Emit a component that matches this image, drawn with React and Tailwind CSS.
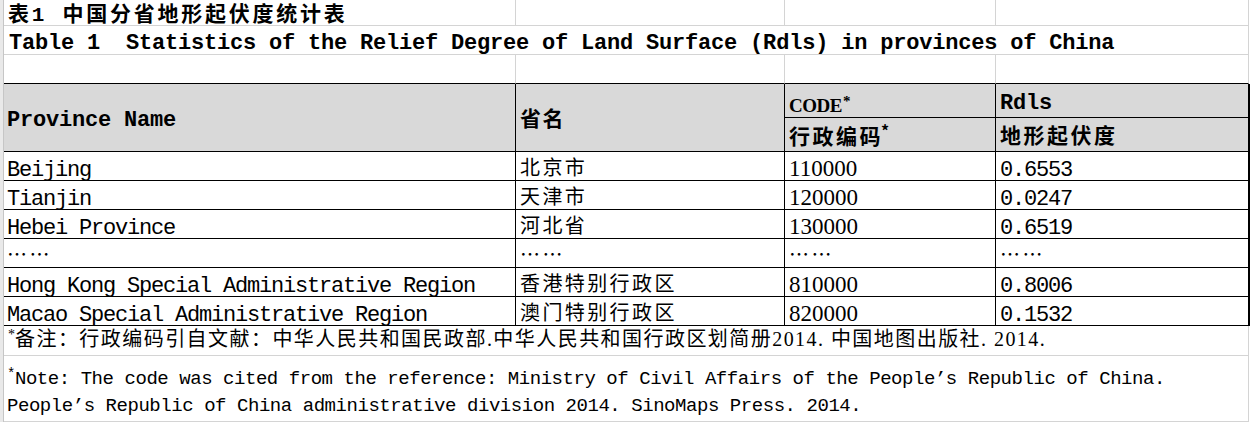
import React from "react";

const MONO = "font-['Liberation_Mono','Noto_Sans_CJK_SC',monospace]";
const CJK = "font-['Noto_Sans_CJK_SC',sans-serif]";
const SERIF = "font-['Liberation_Serif','Noto_Sans_CJK_SC',serif]";

const GRID = "border-[#d4d4d4]";

function Strip() {
  return <div className="w-[4px] shrink-0 self-stretch bg-[#e9e9e9] border-r border-[#c6c6c6]" />;
}

function Star({ cls }) {
  return <span className={`relative ${cls}`}>*</span>;
}

const rows = [
  ["Beijing", "北京市", "110000", "0.6553"],
  ["Tianjin", "天津市", "120000", "0.0247"],
  ["Hebei Province", "河北省", "130000", "0.6519"],
  ["……", "……", "……", "……"],
  ["Hong Kong Special Administrative Region", "香港特别行政区", "810000", "0.8006"],
  ["Macao Special Administrative Region", "澳门特别行政区", "820000", "0.1532"],
];

function DataRow({ r }) {
  const dots = r[0] === "……";
  return (
    <div className="flex h-[29px] shrink-0">
      <Strip />
      <div className="flex w-[512px] shrink-0 items-end border-r border-b border-black pl-[3px]">
        {dots ? (
          <span className={`${CJK} block text-[20px] leading-[20px] tracking-[2.4px] pb-[3px]`}>{r[0]}</span>
        ) : (
          <span className={`${MONO} block text-[22px] leading-[16px] tracking-[-1.2px] pb-[1px] whitespace-pre`}>{r[0]}</span>
        )}
      </div>
      <div className="flex w-[269px] shrink-0 items-end border-r border-b border-black pl-[4px]">
        <span className={`${CJK} block text-[20px] leading-[20px] tracking-[2.4px] pb-[3px]`}>{r[1]}</span>
      </div>
      <div className="flex w-[211px] shrink-0 items-end border-r border-b border-black pl-[4px]">
        {dots ? (
          <span className={`${CJK} block text-[20px] leading-[20px] tracking-[2.4px] pb-[3px]`}>{r[2]}</span>
        ) : (
          <span className={`${SERIF} block text-[23px] leading-[16px] pb-[3px]`}>{r[2]}</span>
        )}
      </div>
      <div className="flex w-[254px] shrink-0 items-end border-r-2 border-b border-black pl-[4px]">
        {dots ? (
          <span className={`${CJK} block text-[20px] leading-[20px] tracking-[2.4px] pb-[3px]`}>{r[3]}</span>
        ) : (
          <span className={`${MONO} block text-[22px] leading-[16px] tracking-[-1.2px] pb-[1px]`}>{r[3]}</span>
        )}
      </div>
    </div>
  );
}

export default function App() {
  return (
    <div className="w-[1251px] h-[423px] overflow-hidden bg-white text-black flex flex-col">
      {/* Row 1: Chinese title */}
      <div className="flex h-[26px] shrink-0">
        <Strip />
        <div className={`flex w-[512px] shrink-0 items-end border-r border-b ${GRID} pl-[4px]`}>
          <span className={`${MONO} block text-[21px] font-bold leading-[18px] tracking-[2.75px] whitespace-pre`}>
            表1 中国分省地形起伏度统计表
          </span>
        </div>
        <div className={`w-[269px] shrink-0 border-r border-b ${GRID}`} />
        <div className={`w-[211px] shrink-0 border-r border-b ${GRID}`} />
        <div className={`w-[253px] shrink-0 border-r border-b ${GRID}`} />
      </div>

      {/* Row 2: English title */}
      <div className="flex h-[29px] shrink-0">
        <Strip />
        <div className={`flex w-[992px] shrink-0 items-end border-b ${GRID} pl-[5px]`}>
          <span className={`${MONO} block text-[22px] font-bold leading-[16px] tracking-[-0.2px] pb-[2px] whitespace-pre`}>
            Table 1  Statistics of the Relief Degree of Land Surface (Rdls) in provinces of China
          </span>
        </div>
        <div className={`w-[253px] shrink-0 border-r border-b ${GRID}`} />
      </div>

      {/* Row 3: empty, bottom border black */}
      <div className="flex h-[29px] shrink-0">
        <Strip />
        <div className="w-[512px] shrink-0 border-r border-b border-r-[#d4d4d4] border-b-black" />
        <div className="w-[269px] shrink-0 border-r border-b border-r-[#d4d4d4] border-b-black" />
        <div className="w-[211px] shrink-0 border-r border-b border-r-[#d4d4d4] border-b-black" />
        <div className="w-[253px] shrink-0 border-r border-b border-r-[#d4d4d4] border-b-black" />
      </div>

      {/* Header rows */}
      <div className="flex h-[68px] shrink-0">
        <Strip />
        <div className="flex w-[512px] shrink-0 items-end bg-[#d9d9d9] border-r border-b border-black pl-[3px]">
          <span className={`${MONO} block text-[22px] font-bold leading-[16px] tracking-[-0.2px] pb-[22px] whitespace-pre`}>
            Province Name
          </span>
        </div>
        <div className="flex w-[269px] shrink-0 items-end bg-[#d9d9d9] border-r border-b border-black pl-[4px]">
          <span className={`${CJK} block text-[21px] font-bold leading-[21px] tracking-[1.5px] pb-[23px]`}>省名</span>
        </div>
        <div className="flex flex-col w-[465px] shrink-0">
          <div className="flex h-[34px] shrink-0">
            <div className="flex w-[211px] shrink-0 items-end bg-[#d9d9d9] border-r border-b border-black pl-[4px]">
              <span className={`${SERIF} block text-[19px] font-bold leading-[14px] tracking-[-0.5px] pb-[3px]`}>
                CODE<Star cls="text-[15px] -top-[6px] ml-[1px]" />
              </span>
            </div>
            <div className="flex w-[254px] shrink-0 items-end bg-[#d9d9d9] border-r-2 border-b border-black pl-[4px]">
              <span className={`${MONO} block text-[22px] font-bold leading-[16px] tracking-[-0.2px] pb-[5px]`}>Rdls</span>
            </div>
          </div>
          <div className="flex h-[34px] shrink-0">
            <div className="flex w-[211px] shrink-0 items-end bg-[#d9d9d9] border-r border-b border-black pl-[4px]">
              <span className={`${CJK} block text-[21px] font-bold leading-[21px] tracking-[2.5px] pb-[3px]`}>
                行政编码<Star cls="text-[16px] -top-[7px] -ml-[2px]" />
              </span>
            </div>
            <div className="flex w-[254px] shrink-0 items-end bg-[#d9d9d9] border-r-2 border-b border-black pl-[4px]">
              <span className={`${CJK} block text-[21px] font-bold leading-[21px] tracking-[2.5px] pb-[6px]`}>地形起伏度</span>
            </div>
          </div>
        </div>
      </div>

      {rows.map((r, i) => (
        <DataRow key={i} r={r} />
      ))}

      {/* Note row 1 (Chinese) */}
      <div className="flex h-[30px] shrink-0">
        <Strip />
        <div className={`flex w-[1245px] shrink-0 items-end border-r border-b ${GRID} pl-[4px]`}>
          <span className={`${SERIF} block text-[20px] leading-[20px] tracking-[1.45px] pb-[3px] whitespace-pre`}>
            <Star cls="text-[14px] -top-[7px] tracking-normal" />
            备注：行政编码引自文献：中华人民共和国民政部.中华人民共和国行政区划简册2014. 中国地图出版社. 2014.
          </span>
        </div>
      </div>

      {/* Note row 2 (English) */}
      <div className="flex h-[66px] shrink-0">
        <Strip />
        <div className={`flex w-[1245px] shrink-0 items-end border-r border-b ${GRID} pl-[3px]`}>
          <div className={`${MONO} text-[19px] leading-[26px] tracking-[-0.45px] pb-[2px] whitespace-pre`}>
            <div>
              <Star cls="text-[14px] -top-[6px]" />
              Note: The code was cited from the reference: Ministry of Civil Affairs of the People’s Republic of China.
            </div>
            <div>People’s Republic of China administrative division 2014. SinoMaps Press. 2014.</div>
          </div>
        </div>
      </div>
    </div>
  );
}
